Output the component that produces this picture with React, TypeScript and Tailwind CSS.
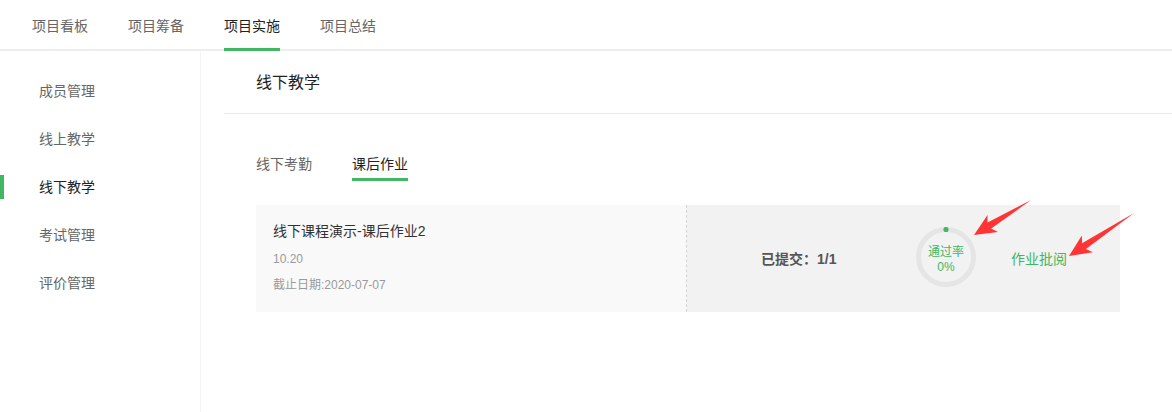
import React from "react";

const topTabs = ["项目看板", "项目筹备", "项目实施", "项目总结"];
const sideItems = ["成员管理", "线上教学", "线下教学", "考试管理", "评价管理"];

// red annotation arrow: tip at (x, y), tail direction by angle, length len
function Arrow(props: { x: number; y: number; angle: number; len: number }) {
  const { x, y, angle, len } = props;
  const pts = `0,0 22,-10 18,-3.5 ${len},0 18,3.5 22,10`;
  return (
    <polygon
      points={pts}
      fill="#ff3434"
      transform={`translate(${x} ${y}) rotate(${angle})`}
    />
  );
}

export default function App() {
  return (
    <div
      className="relative w-[1172px] h-[412px] overflow-hidden bg-white text-[14px] text-[#333]"
      style={{ fontFamily: '"Liberation Sans", "Noto Sans CJK SC", sans-serif' }}
    >
      {/* Top nav */}
      <div className="flex items-start gap-[40px] h-[51px] pl-[32px] border-b-2 border-[#ededed]">
        {topTabs.map((t, i) => (
          <div
            key={t}
            className={
              i === 2
                ? "h-[51px] flex items-center pt-[5px] border-b-[3px] border-[#41b764] text-[#222]"
                : "h-[51px] flex items-center pt-[5px] border-b-[3px] border-transparent text-[#666]"
            }
          >
            {t}
          </div>
        ))}
      </div>

      <div className="flex h-[361px]">
        {/* Sidebar */}
        <div className="w-[201px] shrink-0 border-r border-[#f4f4f4] pt-[16px]">
          {sideItems.map((s, i) => (
            <div key={s} className="flex items-center h-[48px]">
              <div className={i === 2 ? "w-[4px] h-[24px] bg-[#41b764]" : "w-[4px] h-[24px]"} />
              <span className={i === 2 ? "ml-[35px] text-[#222]" : "ml-[35px] text-[#666]"}>{s}</span>
            </div>
          ))}
        </div>

        {/* Content */}
        <div className="flex-1 pl-[23px]">
          <div className="h-[63px] border-b border-[#e8e8e8] pl-[32px] pt-[21px] text-[16px] leading-[22px] text-[#222]">
            线下教学
          </div>

          <div className="pl-[32px] pr-[52px]">
            <div className="flex gap-[40px] mt-[38px] h-[29px]">
              <div className="text-[#666] leading-[22px] pt-[1px]">线下考勤</div>
              <div className="text-[#222] leading-[22px] pt-[1px] h-[29px] border-b-[3px] border-[#41b764]">课后作业</div>
            </div>

            <div className="flex mt-[24px] h-[107px]">
              <div className="w-[431px] bg-[#f9f9f9] pl-[17px] pt-[16px] border-r border-dashed border-[#d4d4d4]">
                <div className="text-[14px] leading-[20px] text-[#333]">线下课程演示-课后作业2</div>
                <div className="mt-[5px] text-[12px] leading-[26px] text-[#999]">10.20</div>
                <div className="text-[12px] leading-[26px] text-[#999]">截止日期:2020-07-07</div>
              </div>
              <div className="flex-1 bg-[#f2f2f2] flex items-center pl-[74px]">
                <div className="w-[155px] font-semibold text-[#555] pt-[1px]">已提交：1/1</div>
                <div className="relative w-[60px] h-[60px] -mt-[3px]">
                  <svg width="60" height="60" viewBox="0 0 60 60" className="absolute inset-0">
                    <circle cx="30" cy="30" r="27.5" fill="none" stroke="#e5e5e5" strokeWidth="5" />
                    <circle cx="30" cy="2.5" r="2.6" fill="#41b764" />
                  </svg>
                  <div className="absolute inset-0 flex flex-col items-center justify-center pt-[6px] text-[12px] leading-[15px] text-[#41b764]">
                    <span>通过率</span>
                    <span>0%</span>
                  </div>
                </div>
                <div className="ml-[35px] text-[#41b764] pt-[1px]">作业批阅</div>
              </div>
            </div>
          </div>
        </div>
      </div>

      {/* annotation arrows */}
      <svg className="absolute inset-0 pointer-events-none" width="1172" height="412">
        <Arrow x={974} y={235} angle={-31.5} len={67} />
        <Arrow x={1069} y={256} angle={-33.5} len={78} />
      </svg>
    </div>
  );
}
